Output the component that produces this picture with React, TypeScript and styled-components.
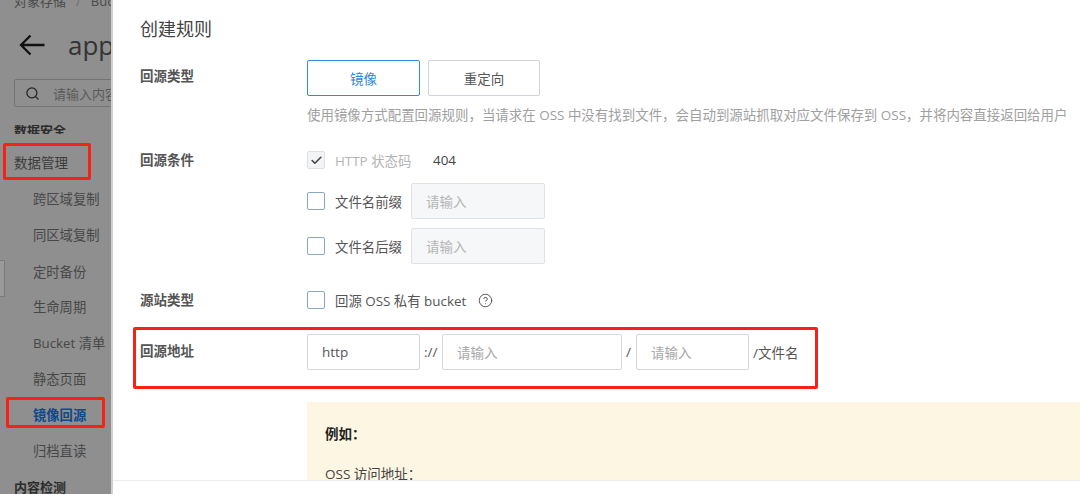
import styled, { createGlobalStyle } from "styled-components";
import { Check, CircleHelp, Search } from "lucide-react";

const GlobalStyle = createGlobalStyle`
  html, body {
    margin: 0;
    padding: 0;
    background: #fff;
  }
  *, *::before, *::after {
    box-sizing: border-box;
  }
  body {
    font-family: "Open Sans", "Noto Sans CJK SC", sans-serif;
  }
`;

const navItems = [
  { label: "跨区域复制", height: 36 },
  { label: "同区域复制", height: 37 },
  { label: "定时备份", height: 36 },
  { label: "生命周期", height: 35 },
  { label: "Bucket 清单", height: 36 },
  { label: "静态页面", height: 36 },
  { label: "镜像回源", height: 36, active: true },
  { label: "归档直读", height: 36 },
];

const App = () => {
  return (
    <Page>
      <GlobalStyle />
      <Sidebar>
        <Breadcrumb>
          对象存储<Slash>/</Slash>Bucket
        </Breadcrumb>
        <BucketTitle>
          <svg width="26" height="22" viewBox="0 0 26 22" fill="none" stroke="#111" strokeWidth="2.3">
            <path d="M25.5 11H2.5M11.5 1.5L2 11l9.5 9.5" />
          </svg>
          <BucketName>app</BucketName>
        </BucketTitle>
        <SearchBox>
          <Search size={15} strokeWidth={2} color="#222" />
          <span>请输入内容</span>
        </SearchBox>
        <SquashedGroup>
          <GroupTitle>数据安全</GroupTitle>
        </SquashedGroup>
        <ManageGroup>数据管理</ManageGroup>
        {navItems.map((item) => (
          <NavItem key={item.label} $height={item.height} $active={item.active}>
            {item.label}
          </NavItem>
        ))}
        <LastGroup>内容检测</LastGroup>
        <SideTab />
      </Sidebar>

      <Drawer>
        <DrawerBody>
          <DrawerTitle>创建规则</DrawerTitle>

          <FormRow $height={84}>
            <Label>回源类型</Label>
            <Field>
              <ButtonGroup>
                <TypeButton $selected>镜像</TypeButton>
                <TypeButton>重定向</TypeButton>
              </ButtonGroup>
              <Hint>
                使用镜像方式配置回源规则，当请求在 OSS 中没有找到文件，会自动到源站抓取对应文件保存到 OSS，并将内容直接返回给用户
              </Hint>
            </Field>
          </FormRow>

          <FormRow $height={140}>
            <Label>回源条件</Label>
            <Field>
              <StatusLine>
                <CheckBox $disabled>
                  <Check size={13} strokeWidth={3} color="#444" />
                </CheckBox>
                <MutedText>HTTP 状态码</MutedText>
                <StatusCode>404</StatusCode>
              </StatusLine>
              <CheckLine $height={45}>
                <CheckBox />
                <CheckText>文件名前缀</CheckText>
                <GreyInput>请输入</GreyInput>
              </CheckLine>
              <CheckLine $height={45}>
                <CheckBox />
                <CheckText>文件名后缀</CheckText>
                <GreyInput>请输入</GreyInput>
              </CheckLine>
            </Field>
          </FormRow>

          <FormRow $height={48}>
            <Label>源站类型</Label>
            <Field>
              <CheckLine $height={32}>
                <CheckBox />
                <CheckText>回源 OSS 私有 bucket</CheckText>
                <HelpIcon>
                  <CircleHelp size={15} strokeWidth={1.4} color="#444" />
                </HelpIcon>
              </CheckLine>
            </Field>
          </FormRow>

          <AddressRow>
            <AddressLabel>回源地址</AddressLabel>
            <AddressField>
              <TextInput $width={113} $filled>
                http
              </TextInput>
              <Separator $width={22}>://</Separator>
              <TextInput $width={180}>请输入</TextInput>
              <Separator $width={14}>/</Separator>
              <TextInput $width={113}>请输入</TextInput>
              <FileSuffix>/文件名</FileSuffix>
            </AddressField>
          </AddressRow>

          <Example>
            <ExampleTitle>例如：</ExampleTitle>
            <ExampleLine>OSS 访问地址：</ExampleLine>
          </Example>
        </DrawerBody>
        <DrawerFooter />
      </Drawer>
    </Page>
  );
};

export default App;

const Page = styled.div`
  display: flex;
  width: 1080px;
  height: 494px;
  overflow: hidden;
  background: #fff;
`;

const Sidebar = styled.aside`
  position: relative;
  flex: 0 0 111px;
  padding-left: 14px;
  background: #8f8f8f;
  color: #3c3c3c;
  overflow: hidden;
  white-space: nowrap;
`;

const Breadcrumb = styled.div`
  height: 12px;
  margin-top: -7px;
  font-size: 13px;
  line-height: 16px;
  color: #4a4a4a;
`;

const Slash = styled.span`
  margin: 0 10px;
  color: #6d6d6d;
`;

const BucketTitle = styled.div`
  display: flex;
  align-items: center;
  gap: 23px;
  height: 36px;
  margin-top: 22px;
  margin-left: 5px;

  svg {
    flex: none;
  }
`;

const BucketName = styled.span`
  flex: none;
  font-size: 26px;
  color: #333;
`;

const SearchBox = styled.div`
  display: flex;
  align-items: center;
  gap: 13px;
  width: 130px;
  height: 28px;
  margin-top: 16px;
  padding-left: 10px;
  border: 1px solid #747474;
  border-radius: 2px;
  font-size: 13px;
  color: #5a5a5a;

  svg {
    flex: none;
  }
`;

const SquashedGroup = styled.div`
  height: 9px;
  margin-top: 18px;
  overflow: hidden;

  div {
    margin-top: -5px;
  }
`;

const GroupTitle = styled.div`
  height: 20px;
  font-size: 13px;
  font-weight: 700;
  line-height: 20px;
  color: #2c2c2c;
`;

const LastGroup = styled(GroupTitle)`
  margin-top: 9px;
`;

const ManageGroup = styled.div`
  position: relative;
  display: flex;
  align-items: center;
  height: 37px;
  margin-top: 9px;
  font-size: 13.5px;
  color: #3c3c3c;

  &::after {
    content: "";
    position: absolute;
    left: -11px;
    top: 0;
    width: 88px;
    height: 37px;
    border: 3px solid #fb2016;
    border-radius: 2px;
  }
`;

const NavItem = styled.div<{ $height: number; $active?: boolean }>`
  position: relative;
  display: flex;
  align-items: center;
  height: ${({ $height }) => $height}px;
  padding-left: 19px;
  font-size: 13.3px;
  font-weight: ${({ $active }) => ($active ? 700 : 400)};
  color: ${({ $active }) => ($active ? "#0b4a8f" : "#474747")};

  ${({ $active }) =>
    $active &&
    `
    &::after {
      content: "";
      position: absolute;
      left: -8px;
      top: 1px;
      width: 99px;
      height: 31px;
      border: 3px solid #fb2016;
      border-radius: 2px;
    }
  `}
`;

const SideTab = styled.div`
  position: absolute;
  left: 0;
  top: 260px;
  width: 5px;
  height: 37px;
  background: #9a9a9a;
  border: 1px solid #7a7a7a;
  border-left: none;
`;

const Drawer = styled.main`
  flex: 1;
  display: flex;
  flex-direction: column;
  min-width: 0;
  border-left: 2px solid #cfcfcf;
`;

const DrawerBody = styled.div`
  flex: 1;
  padding-left: 27px;
  overflow: hidden;
`;

const DrawerFooter = styled.footer`
  flex: 0 0 14px;
  background: #fff;
  border-top: 1px solid #ececec;
`;

const DrawerTitle = styled.h2`
  height: 60px;
  margin: 0;
  padding-top: 17px;
  font-size: 18px;
  font-weight: 400;
  line-height: 24px;
  color: #444;
`;

const FormRow = styled.div<{ $height: number }>`
  display: flex;
  height: ${({ $height }) => $height}px;
`;

const Label = styled.div`
  flex: 0 0 167px;
  padding-top: 7px;
  font-size: 13.5px;
  font-weight: 700;
  line-height: 18px;
  color: #555;
`;

const Field = styled.div`
  flex: 1;
  min-width: 0;
`;

const ButtonGroup = styled.div`
  display: flex;
  gap: 8px;
`;

const TypeButton = styled.div<{ $selected?: boolean }>`
  display: flex;
  align-items: center;
  justify-content: center;
  width: ${({ $selected }) => ($selected ? 113 : 112)}px;
  height: 36px;
  border: 1px solid ${({ $selected }) => ($selected ? "#2f8ae0" : "#d0d3d8")};
  border-radius: 2px;
  font-size: 13.5px;
  color: ${({ $selected }) => ($selected ? "#2f86d8" : "#555")};
`;

const Hint = styled.p`
  margin: 10px 0 0;
  font-size: 13.46px;
  line-height: 18px;
  white-space: nowrap;
  color: #a0a0a0;
`;

const CheckLine = styled.div<{ $height: number }>`
  display: flex;
  align-items: center;
  height: ${({ $height }) => $height}px;
`;

const StatusLine = styled.div`
  display: flex;
  align-items: center;
  height: 34px;
  padding-bottom: 2px;
`;

const CheckBox = styled.span<{ $disabled?: boolean }>`
  display: flex;
  align-items: center;
  justify-content: center;
  flex: 0 0 18px;
  width: 18px;
  height: 18px;
  margin-right: 10px;
  border: 1px solid ${({ $disabled }) => ($disabled ? "#dcdfe4" : "#8ba6c2")};
  border-radius: 2px;
  background: ${({ $disabled }) => ($disabled ? "#f3f4f6" : "#fff")};
`;

const CheckText = styled.span`
  font-size: 13.4px;
  color: #555;
`;

const MutedText = styled(CheckText)`
  width: 98px;
  color: #b4b4b4;
`;

const StatusCode = styled(CheckText)`
  color: #444;
`;

const GreyInput = styled.div`
  display: flex;
  align-items: center;
  width: 134px;
  height: 36px;
  margin-left: 9px;
  padding-left: 14px;
  border: 1px solid #dfe2e6;
  border-radius: 2px;
  background: #f6f7f9;
  font-size: 13.5px;
  color: #b5b5b5;
`;

const HelpIcon = styled.span`
  display: flex;
  margin-left: 12px;
`;

const AddressRow = styled.div`
  position: relative;
  display: flex;
  height: 70px;
  padding-top: 2px;

  &::after {
    content: "";
    position: absolute;
    left: -7px;
    top: -5px;
    width: 685px;
    height: 62px;
    border: 3px solid #fb2016;
    border-radius: 2px;
  }
`;

const AddressLabel = styled(Label)`
  padding-top: 8px;
`;

const AddressField = styled.div`
  display: flex;
  align-items: center;
  height: 36px;
`;

const TextInput = styled.div<{ $width: number; $filled?: boolean }>`
  display: flex;
  align-items: center;
  width: ${({ $width }) => $width}px;
  height: 36px;
  padding-left: 14px;
  border: 1px solid #d4d7dc;
  border-radius: 2px;
  font-size: 13.5px;
  color: ${({ $filled }) => ($filled ? "#555" : "#a8a8a8")};
`;

const Separator = styled.span<{ $width: number }>`
  width: ${({ $width }) => $width}px;
  padding-left: 4px;
  font-size: 13.5px;
  color: #555;
`;

const FileSuffix = styled.span`
  margin-left: 4px;
  font-size: 13.5px;
  color: #555;
`;

const Example = styled.section`
  height: 200px;
  margin-left: 167px;
  padding: 23px 18px;
  background: #fdf6e3;
`;

const ExampleTitle = styled.div`
  height: 40px;
  font-size: 13.5px;
  font-weight: 700;
  line-height: 18px;
  color: #222;
`;

const ExampleLine = styled.div`
  font-size: 13.5px;
  line-height: 18px;
  color: #444;
`;
